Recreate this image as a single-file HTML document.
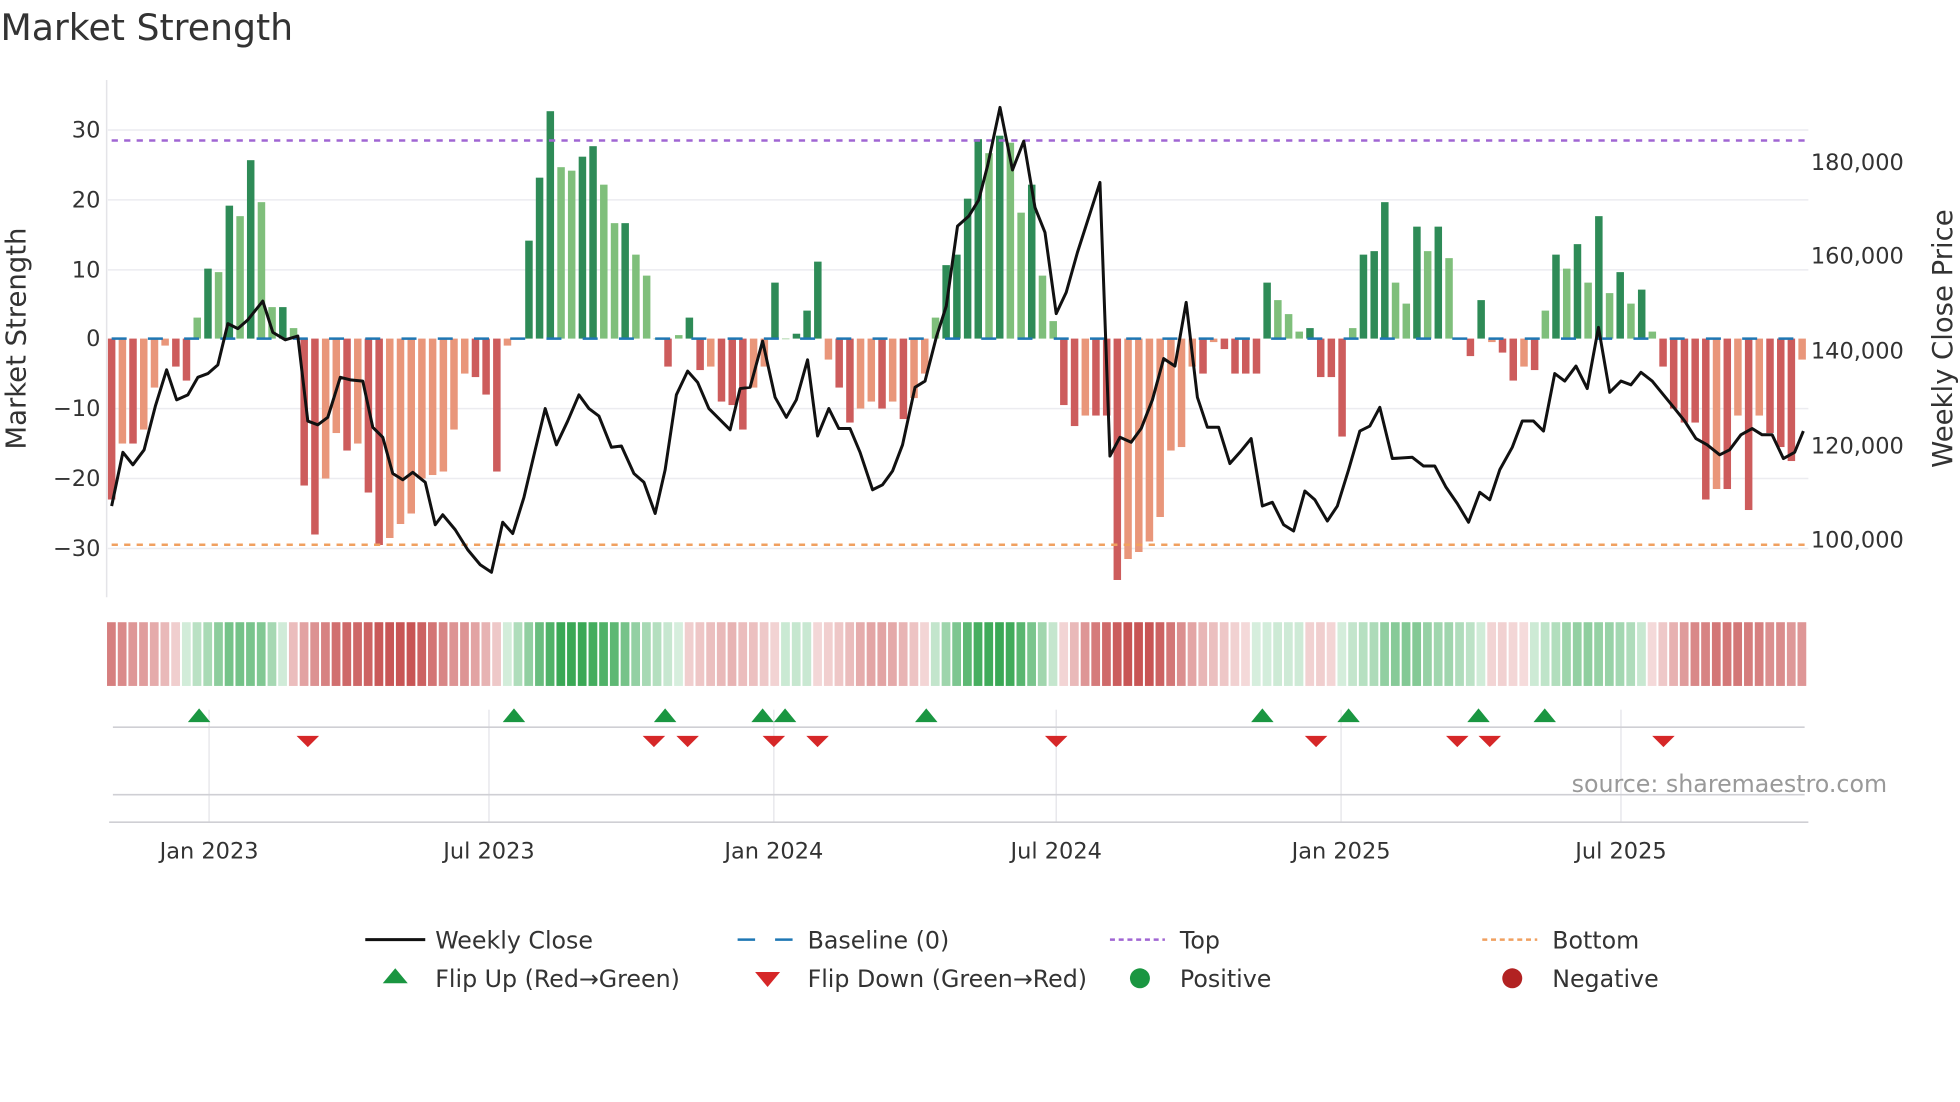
<!DOCTYPE html>
<html><head><meta charset="utf-8"><style>
html,body{margin:0;padding:0;background:#fff;}
svg{display:block;font-family:"DejaVu Sans","Liberation Sans",sans-serif;}
</style></head><body>
<svg id="c" width="1960" height="1102" viewBox="0 0 1568 882" xmlns="http://www.w3.org/2000/svg">
<rect width="1568" height="882" fill="#fff"/>
<text x="0" y="32" font-size="29" fill="#333">Market Strength</text>
<g stroke="#ececf0" stroke-width="1.2">
<line x1="86" x2="1447" y1="104" y2="104"/><line x1="86" x2="1447" y1="160" y2="160"/>
<line x1="86" x2="1447" y1="216" y2="216"/><line x1="86" x2="1447" y1="327" y2="327"/>
<line x1="86" x2="1447" y1="383" y2="383"/><line x1="86" x2="1447" y1="439" y2="439"/>
</g>
<line x1="85" x2="85" y1="64" y2="478" stroke="#e4e4e8" stroke-width="1.2"/>
<g font-size="18" fill="#333" text-anchor="end">
<text x="80" y="110">30</text><text x="80" y="166">20</text><text x="80" y="222">10</text>
<text x="80" y="277">0</text><text x="80" y="333">−10</text><text x="80" y="389">−20</text><text x="80" y="445">−30</text>
</g>
<g font-size="18" fill="#333">
<text x="1449" y="136">180,000</text><text x="1449" y="211">160,000</text><text x="1449" y="287">140,000</text>
<text x="1449" y="363">120,000</text><text x="1449" y="438">100,000</text>
</g>
<text transform="translate(20,271) rotate(-90)" font-size="22" fill="#333" text-anchor="middle">Market Strength</text>
<text transform="translate(1562,271) rotate(-90)" font-size="22" fill="#333" text-anchor="middle">Weekly Close Price</text>
<g id="bars"></g>
<line x1="89" x2="1444" y1="271" y2="271" stroke="#1f77b4" stroke-width="2" stroke-dasharray="12,17"/>
<line x1="89" x2="1444" y1="112.5" y2="112.5" stroke="#a066d3" stroke-width="2" stroke-dasharray="5,5"/>
<line x1="89" x2="1444" y1="436" y2="436" stroke="#f0a060" stroke-width="2" stroke-dasharray="5,5"/>
<polyline fill="none" stroke="#111" stroke-width="2.4" stroke-linejoin="round" points="89,405 98,362 106,372 115,360 124,325 133,296 141,320 150,316 158,302 166,299 174,292 182,259 190,263 198,256 210,241 218,266 228,272 238,269 246,337 254,340 262,334 272,302 280,304 290,305 298,342 306,350 314,379 322,384 330,378 340,386 348,420 354,412 364,424 374,440 384,452 393,458 402,418 410,427 419,398 428,360 436,327 445,356 454,337 463,316 471,327 479,333 489,358 497,357 507,379 515,386 524,411 532,376 541,316 550,297 558,306 567,327 575,335 584,344 592,311 600,310 610,273 620,318 629,334 637,320 646,288 654,349 663,327 671,343 680,343 688,362 698,392 706,388 714,377 722,356 732,310 740,305 749,270 757,245 766,181 775,173 783,160 790,133 800,86 810,136 819,113 828,166 836,186 845,251 853,234 862,202 880,146 888,365 896,350 905,354 913,343 922,320 931,287 940,293 949,242 958,318 966,342 975,342 984,371 992,362 1001,351 1010,405 1018,402 1027,420 1035,425 1044,393 1052,400 1062,417 1070,405 1079,376 1088,345 1096,341 1104,326 1114,367 1130,366 1139,373 1148,373 1157,390 1166,403 1175,418 1184,394 1192,400 1200,376 1210,358 1218,337 1227,337 1235,345 1244,299 1252,305 1261,293 1270,311 1279,262 1288,314 1297,305 1305,308 1313,298 1322,305 1331,316 1340,327 1348,337 1357,351 1366,356 1376,364 1384,360 1393,348 1402,343 1410,348 1418,348 1427,367 1436,362 1443,345"/>
<g id="heat"></g>
<g stroke="#e8e8ec" stroke-width="1.2">
<line x1="167" x2="167" y1="568" y2="658"/><line x1="391" x2="391" y1="568" y2="658"/>
<line x1="619" x2="619" y1="568" y2="658"/><line x1="845" x2="845" y1="568" y2="658"/>
<line x1="1073" x2="1073" y1="568" y2="658"/><line x1="1297" x2="1297" y1="568" y2="658"/>
</g>
<line x1="90" x2="1444" y1="582" y2="582" stroke="#cfcfd4" stroke-width="1.3"/>
<line x1="90" x2="1444" y1="636" y2="636" stroke="#cfcfd4" stroke-width="1.3"/>
<line x1="87" x2="1447" y1="658" y2="658" stroke="#cfcfd4" stroke-width="1.3"/>
<g id="flips"></g>
<text x="1510" y="634" font-size="19" fill="#999" text-anchor="end">source: sharemaestro.com</text>
<g font-size="18" fill="#333" text-anchor="middle">
<text x="167" y="687">Jan 2023</text><text x="391" y="687">Jul 2023</text><text x="619" y="687">Jan 2024</text>
<text x="845" y="687">Jul 2024</text><text x="1073" y="687">Jan 2025</text><text x="1297" y="687">Jul 2025</text>
</g>
<g font-size="19" fill="#333">
<line x1="292" x2="340" y1="752" y2="752" stroke="#111" stroke-width="2.4"/>
<text x="348" y="759">Weekly Close</text>
<line x1="590" x2="634" y1="752" y2="752" stroke="#1f77b4" stroke-width="2" stroke-dasharray="14,16"/>
<text x="646" y="759">Baseline (0)</text>
<line x1="888" x2="932" y1="752" y2="752" stroke="#a066d3" stroke-width="2" stroke-dasharray="4,3"/>
<text x="944" y="759">Top</text>
<line x1="1186" x2="1230" y1="752" y2="752" stroke="#f0a060" stroke-width="2" stroke-dasharray="4,3"/>
<text x="1242" y="759">Bottom</text>
<polygon points="306,787 316,775 326,787" fill="#1a9641"/>
<text x="348" y="790">Flip Up (Red→Green)</text>
<polygon points="604,778 624,778 614,790" fill="#d62728"/>
<text x="646" y="790">Flip Down (Green→Red)</text>
<circle cx="912" cy="783" r="8" fill="#1a9641"/>
<text x="944" y="790">Positive</text>
<circle cx="1210" cy="783" r="8" fill="#b22222"/>
<text x="1242" y="790">Negative</text>
</g>
</svg>
<script>
var v=[-23,-15,-15,-13,-7,-1,-4,-6,3,10,9.5,19,17.5,25.5,19.5,4.5,4.5,1.5,-21,-28,-20,-13.5,-16,-15,-22,-29.5,-28.5,-26.5,-25,-20,-19.5,-19,-13,-5,-5.5,-8,-19,-1,0,14,23,32.5,24.5,24,26,27.5,22,16.5,16.5,12,9,0,-4,0.5,3,-4.5,-4,-9,-9.5,-13,-7,-4,8,0,0.7,4,11,-3,-7,-12,-10,-9,-10,-9,-11.5,-8.5,-5,3,10.5,12,20,28.5,26.5,29,28,18,22,9,2.5,-9.5,-12.5,-11,-11,-11,-34.5,-31.5,-30.5,-29,-25.5,-16,-15.5,-4,-5,-0.5,-1.5,-5,-5,-5,8,5.5,3.5,1,1.5,-5.5,-5.5,-14,1.5,12,12.5,19.5,8,5,16,12.5,16,11.5,0,-2.5,5.5,-0.5,-2,-6,-4,-4.5,4,12,10,13.5,8,17.5,6.5,9.5,5,7,1,-4,-10,-12,-12,-23,-21.5,-21.5,-11,-24.5,-11,-13.5,-15.5,-17.5,-3];
var N=v.length,x0=89,x1=1442,st=(x1-x0)/(N-1),b='',h='',z=271,k=5.6;
function mix(a,c,t){return 'rgb('+[0,1,2].map(function(i){return Math.round(a[i]+(c[i]-a[i])*t)}).join(',')+')';}
for(var i=0;i<N;i++){var x=x0+i*st,val=v[i],p=i?Math.abs(v[i-1]):0,dark=Math.abs(val)>=p;
var col=val>=0?(dark?'#2e8b57':'#7fbf7b'):(dark?'#cd5c5c':'#e9967a');
var hgt=Math.abs(val)*k,y=val>=0?z-hgt:z;
b+='<rect x="'+(x-3).toFixed(1)+'" y="'+y.toFixed(1)+'" width="6" height="'+Math.max(hgt,0.5).toFixed(1)+'" fill="'+col+'"/>';
var s=0,n=0;for(var j=i-3;j<=i+3;j++){if(j>=0&&j<N){s+=v[j];n++;}}s/=n;var t=Math.min(Math.abs(s)/24,1);
var hc=s>=0?mix([214,238,221],[58,168,85],t):mix([245,220,220],[200,85,85],t);
h+='<rect x="'+(x-st/2+0.6).toFixed(1)+'" y="498" width="'+(st-1.6).toFixed(1)+'" height="51" fill="'+hc+'"/>';}
document.getElementById('bars').innerHTML=b;document.getElementById('heat').innerHTML=h;
var up=[159,411,532,610,628,741,1010,1079,1183,1236],dn=[246,523,550,619,654,845,1053,1166,1192,1331],f='';
up.forEach(function(x){f+='<polygon points="'+(x-9)+',578 '+x+',567 '+(x+9)+',578" fill="#1a9641"/>';});
dn.forEach(function(x){f+='<polygon points="'+(x-9)+',589 '+(x+9)+',589 '+x+',598" fill="#d62728"/>';});
document.getElementById('flips').innerHTML=f;
</script>
</body></html>
